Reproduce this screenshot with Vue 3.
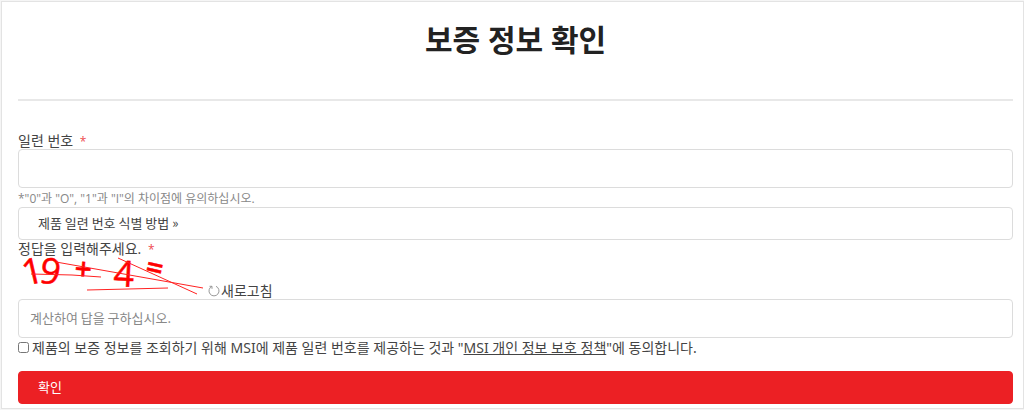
<script setup>
import { ref } from 'vue'

const serial = ref('')
const answer = ref('')
const agreed = ref(false)
</script>

<template>
  <main class="panel">
    <h1>보증 정보 확인</h1>
    <hr />
    <form @submit.prevent>
      <label class="caption" for="serial">일련 번호 <span class="required">*</span></label>
      <input id="serial" v-model="serial" class="field" type="text" />
      <p class="note">*"0"과 "O", "1"과 "I"의 차이점에 유의하십시오.</p>
      <button class="bar help" type="button">제품 일련 번호 식별 방법 »</button>

      <label class="caption" for="answer">정답을 입력해주세요. <span class="required">*</span></label>
      <div class="challenge">
        <svg class="captcha" width="190" height="42" viewBox="0 0 190 42" role="img" aria-label="19 + 4 =">
          <g class="digits">
            <text transform="translate(7 29) rotate(-13)">1</text>
            <text transform="translate(20 25) rotate(10)">9</text>
            <text class="sign" transform="translate(56 22) rotate(4)">+</text>
            <text transform="translate(95 29) rotate(3)">4</text>
            <text class="sign" transform="translate(126 19) rotate(13)">=</text>
          </g>
          <g class="strokes">
            <path d="M13 17L54 18L83 20" />
            <path d="M38 5L185 31" />
            <path d="M69 33L110 32L150 31" />
            <path d="M100 1L179 37" />
          </g>
        </svg>
        <button class="refresh" type="button">
          <svg width="12" height="12" viewBox="0 0 12 12" aria-hidden="true">
            <path d="M4 1.3A5 5 0 1 0 8 1.3M1.5 1.3H4V3.8" />
          </svg>새로고침
        </button>
      </div>
      <input id="answer" v-model="answer" class="field" type="text" placeholder="계산하여 답을 구하십시오." />

      <div class="consent">
        <input id="agree" v-model="agreed" type="checkbox" />
        <label for="agree">제품의 보증 정보를 조회하기 위해 MSI에 제품 일련 번호를 제공하는 것과 "<a href="#privacy">MSI 개인 정보 보호 정책</a>"에 동의합니다.</label>
      </div>
      <button class="bar submit" type="submit">확인</button>
    </form>
  </main>
</template>

<style>
body {
  background: #f5f5f5;
}
</style>

<style scoped>
.panel {
  margin: 1px 0 0 1px;
  padding: 0 10px 4px 16px;
  border: 1px solid #e3e3e3;
  background: #fff;
  color: #444;
  font-family: "Open Sans", "Noto Sans CJK KR", sans-serif;
  font-size: 14px;
  line-height: 20px;
}

h1 {
  margin: 0;
  padding: 16px 0 37px;
  color: #222;
  font-size: 30px;
  font-weight: 700;
  line-height: 44px;
  text-align: center;
}

hr {
  height: 2px;
  margin: 0 0 30px;
  border: 0;
  background: #e8e8e8;
}

button,
input {
  font: inherit;
  color: inherit;
}

.caption {
  display: block;
  height: 18px;
}

.required {
  margin-left: 3px;
  color: #ee4b50;
  font-size: 12px;
}

.field {
  display: block;
  box-sizing: border-box;
  width: 100%;
  height: 39px;
  padding: 0 11px 2px;
  border: 1px solid #dcdcdc;
  border-radius: 4px;
  background: #fff;
  font-family: "Noto Sans CJK KR", sans-serif;
  font-size: 13px;
}

.field::placeholder {
  color: #888;
  opacity: 1;
}

.note {
  margin: 0;
  padding-top: 2px;
  color: #888;
  font-size: 12px;
  line-height: 17px;
}

.bar {
  display: block;
  box-sizing: border-box;
  width: 100%;
  height: 33px;
  padding: 0 19px 2px;
  border: 1px solid #dcdcdc;
  border-radius: 4px;
  background: #fff;
  font-family: "Noto Sans CJK KR", sans-serif;
  font-size: 13px;
  text-align: left;
}

.help {
  margin-bottom: -1px;
}

.challenge {
  display: flex;
  align-items: flex-end;
}

.captcha {
  display: block;
  overflow: visible;
}

.digits {
  fill: #f00;
  stroke: #f00;
  stroke-width: 0.5;
  font-size: 36px;
}

.sign {
  font-size: 30px;
  font-weight: 600;
}

.strokes {
  fill: none;
  stroke: #f22;
  stroke-width: 1;
}

.refresh {
  display: flex;
  align-items: center;
  gap: 1px;
  height: 16px;
  padding: 0;
  border: 0;
  background: none;
}

.refresh svg {
  fill: none;
  stroke: #999;
}

.consent {
  display: flex;
  align-items: center;
  gap: 3px;
  height: 19px;
  padding-bottom: 14px;
  font-family: "Noto Sans", "Noto Sans CJK KR", sans-serif;
}

.consent input {
  width: 11px;
  height: 11px;
  margin: 0;
}

.consent a {
  color: inherit;
}

.submit {
  border-color: #ec2024;
  background: #ec2024;
  color: #fff;
}
</style>
